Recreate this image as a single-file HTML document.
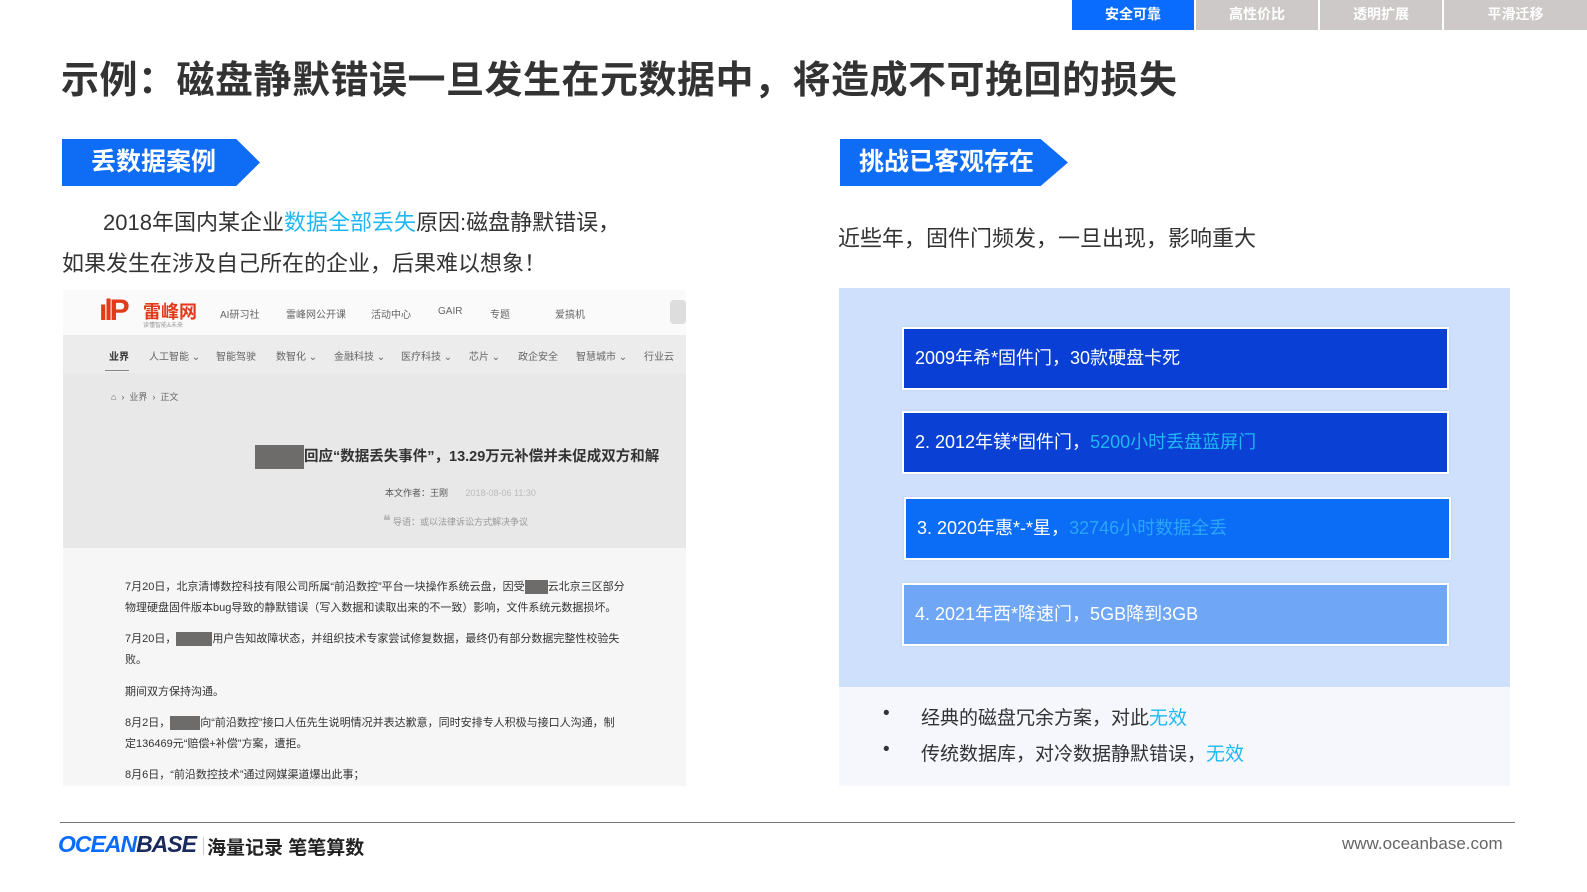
<!DOCTYPE html>
<html style="width:1587px;height:892px;overflow:hidden"><head><meta charset="utf-8"><style>
*{margin:0;padding:0;box-sizing:border-box}
html,body{width:1587px;height:892px;overflow:hidden}
body{background:#fff;position:relative;font-family:"Liberation Sans","Noto Sans CJK SC",sans-serif;color:#333}
#w{position:absolute;left:0;top:0;width:1587px;height:892px;overflow:hidden}
.a{position:absolute;white-space:nowrap}
.tab{position:absolute;top:0;height:30px;width:122px;background:#ccc9c8;color:#fff;font-size:14px;font-weight:bold;text-align:center;line-height:28px}
.tag{position:absolute;height:47px;background:#0f6cf5;color:#fff;font-size:25px;font-weight:bold;line-height:46px;clip-path:polygon(0 0,88% 0,100% 50%,88% 100%,0 100%)}
.box{position:absolute;height:63px;border:2px solid #fff;color:#fff;font-size:18px;line-height:58px;padding-left:11px;box-shadow:0 0 2px rgba(0,0,0,.1)}
.cy{color:#1db8f5}
.s{color:#666;font-size:10px}
.gray{background:#6e6b6b;display:inline-block;vertical-align:middle}
.p{font-size:11px;color:#333}
</style></head><body><div id="w">
<div class="tab" style="left:1072px;background:#0a6cff">安全可靠</div>
<div class="tab" style="left:1196px">高性价比</div>
<div class="tab" style="left:1320px">透明扩展</div>
<div class="tab" style="left:1444px;width:143px">平滑迁移</div>

<div class="a" style="left:61px;top:49px;font-size:38px;font-weight:bold;color:#333;letter-spacing:0.5px">示例：磁盘静默错误一旦发生在元数据中，将造成不可挽回的损失</div>

<div class="tag" style="left:62px;top:139px;width:198px;padding-left:29px">丢数据案例</div>
<div class="tag" style="left:840px;top:139px;width:228px;padding-left:19px">挑战已客观存在</div>

<div class="a" style="left:103px;top:205px;font-size:22px;color:#333">2018年国内某企业<span class="cy">数据全部丢失</span>原因:磁盘静默错误，</div>
<div class="a" style="left:62px;top:246px;font-size:22px;color:#333">如果发生在涉及自己所在的企业，后果难以想象！</div>

<div class="a" style="left:63px;top:290px;width:623px;height:496px;background:#f6f6f6;overflow:hidden">
 <div class="a" style="left:0;top:0;width:623px;height:45px;background:#fafafa"></div>
 <div class="a" style="left:36px;top:4px;font-size:30px;font-weight:bold;color:#e23a1a;letter-spacing:-3px">ılP</div>
 <div class="a" style="left:80px;top:8px;font-size:18px;font-weight:bold;color:#e23a1a">雷峰网</div>
 <div class="a" style="left:80px;top:30px;font-size:6px;color:#999">读懂智能&amp;未来</div>
 <div class="a s" style="left:157px;top:16px">AI研习社</div>
 <div class="a s" style="left:223px;top:16px">雷峰网公开课</div>
 <div class="a s" style="left:308px;top:16px">活动中心</div>
 <div class="a s" style="left:375px;top:16px">GAIR</div>
 <div class="a s" style="left:427px;top:16px">专题</div>
 <div class="a s" style="left:492px;top:16px">爱搞机</div>
 <div class="a" style="left:607px;top:10px;width:16px;height:24px;background:#ddd;border-radius:4px"></div>
 <div class="a" style="left:0;top:45px;width:623px;height:38px;background:#ececec"></div>
 <div class="a s" style="left:46px;top:58px;color:#333;font-weight:bold">业界</div>
 <div class="a" style="left:42px;top:80px;width:24px;height:1px;background:#888"></div>
 <div class="a s" style="left:86px;top:58px">人工智能 ⌄</div>
 <div class="a s" style="left:153px;top:58px">智能驾驶</div>
 <div class="a s" style="left:213px;top:58px">数智化 ⌄</div>
 <div class="a s" style="left:271px;top:58px">金融科技 ⌄</div>
 <div class="a s" style="left:338px;top:58px">医疗科技 ⌄</div>
 <div class="a s" style="left:406px;top:58px">芯片 ⌄</div>
 <div class="a s" style="left:455px;top:58px">政企安全</div>
 <div class="a s" style="left:513px;top:58px">智慧城市 ⌄</div>
 <div class="a s" style="left:581px;top:58px">行业云</div>
 <div class="a" style="left:0;top:83px;width:623px;height:175px;background:#e8e8e8"></div>
 <div class="a s" style="left:48px;top:100px;font-size:9px">⌂ &nbsp;›&nbsp; 业界 &nbsp;›&nbsp; 正文</div>
 <div class="a" style="left:192px;top:155px;font-size:14.5px;font-weight:bold;color:#333"><span class="gray" style="width:49px;height:24px"></span>回应“数据丢失事件”，13.29万元补偿并未促成双方和解</div>
 <div class="a" style="left:322px;top:196px;font-size:9px;color:#555">本文作者：王刚 &nbsp;&nbsp;&nbsp;&nbsp;&nbsp;&nbsp;<span style="color:#bbb">2018-08-06 11:30</span></div>
 <div class="a" style="left:320px;top:222px;font-size:9px;color:#999"><b style="font-size:14px;color:#bbb">❝</b> 导语：或以法律诉讼方式解决争议</div>
 <div class="a p" style="left:62px;top:288px">7月20日，北京清博数控科技有限公司所属“前沿数控”平台一块操作系统云盘，因受<span class="gray" style="width:23px;height:14px"></span>云北京三区部分</div>
 <div class="a p" style="left:62px;top:309px">物理硬盘固件版本bug导致的静默错误（写入数据和读取出来的不一致）影响，文件系统元数据损坏。</div>
 <div class="a p" style="left:62px;top:340px">7月20日，<span class="gray" style="width:36px;height:14px"></span>用户告知故障状态，并组织技术专家尝试修复数据，最终仍有部分数据完整性校验失</div>
 <div class="a p" style="left:62px;top:361px">败。</div>
 <div class="a p" style="left:62px;top:393px">期间双方保持沟通。</div>
 <div class="a p" style="left:62px;top:424px">8月2日，<span class="gray" style="width:30px;height:14px"></span>向“前沿数控”接口人伍先生说明情况并表达歉意，同时安排专人积极与接口人沟通，制</div>
 <div class="a p" style="left:62px;top:445px">定136469元“赔偿+补偿”方案，遭拒。</div>
 <div class="a p" style="left:62px;top:476px">8月6日，“前沿数控技术”通过网媒渠道爆出此事；</div>
</div>

<div class="a" style="left:838px;top:221px;font-size:22px;color:#333">近些年，固件门频发，一旦出现，影响重大</div>

<div class="a" style="left:839px;top:288px;width:671px;height:399px;background:#cfe0fd"></div>
<div class="a" style="left:839px;top:687px;width:671px;height:99px;background:#f5f7fc"></div>
<div class="box" style="left:902px;top:327px;width:547px;background:#0a3fd6">2009年希*固件门，30款硬盘卡死</div>
<div class="box" style="left:902px;top:411px;width:547px;background:#0a40d4">2. 2012年镁*固件门，<span class="cy">5200小时丢盘蓝屏门</span></div>
<div class="box" style="left:904px;top:497px;width:547px;background:#0b6cf6">3. 2020年惠*-*星，<span style="color:#2aa6f8">32746小时数据全丢</span></div>
<div class="box" style="left:902px;top:583px;width:547px;background:#6fa7f6">4. 2021年西*降速门，5GB降到3GB</div>

<div class="a" style="left:883px;top:703px;font-size:19px">•</div>
<div class="a" style="left:921px;top:703px;font-size:19px">经典的磁盘冗余方案，对此<span class="cy">无效</span></div>
<div class="a" style="left:883px;top:739px;font-size:19px">•</div>
<div class="a" style="left:921px;top:739px;font-size:19px">传统数据库，对冷数据静默错误，<span class="cy">无效</span></div>

<div class="a" style="left:60px;top:822px;width:1455px;height:1px;background:#777"></div>
<div class="a" style="left:58px;top:831px;font-size:23px;font-weight:900;font-style:italic;letter-spacing:-1px"><span style="color:#0a6cff">OCEAN</span><span style="color:#1b2a5e">BASE</span></div>
<div class="a" style="left:203px;top:837px;width:1px;height:18px;background:#ccc"></div>
<div class="a" style="left:207px;top:833px;font-size:19px;font-weight:bold;color:#222">海量记录 笔笔算数</div>
<div class="a" style="left:1342px;top:834px;font-size:17px;color:#666">www.oceanbase.com</div>
</div></body></html>
